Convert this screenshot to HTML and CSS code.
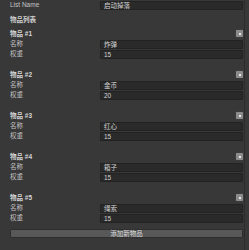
FILE: index.html
```html
<!DOCTYPE html>
<html>
<head>
<meta charset="utf-8">
<link rel="stylesheet" href="styles.css">
</head>
<body>
<div class="inspector">
  <div class="row">
    <div class="label">List Name</div>
    <div class="field">启动掉落</div>
  </div>
  <div class="section-title">物品列表</div>

  <div class="item">
    <div class="item-head"><span class="item-title">物品 #1</span><span class="remove"></span></div>
    <div class="row"><div class="label">名称</div><div class="field">炸弹</div></div>
    <div class="row"><div class="label">权重</div><div class="field">15</div></div>
  </div>

  <div class="item">
    <div class="item-head"><span class="item-title">物品 #2</span><span class="remove"></span></div>
    <div class="row"><div class="label">名称</div><div class="field">金币</div></div>
    <div class="row"><div class="label">权重</div><div class="field">20</div></div>
  </div>

  <div class="item">
    <div class="item-head"><span class="item-title">物品 #3</span><span class="remove"></span></div>
    <div class="row"><div class="label">名称</div><div class="field">红心</div></div>
    <div class="row"><div class="label">权重</div><div class="field">15</div></div>
  </div>

  <div class="item">
    <div class="item-head"><span class="item-title">物品 #4</span><span class="remove"></span></div>
    <div class="row"><div class="label">名称</div><div class="field">箱子</div></div>
    <div class="row"><div class="label">权重</div><div class="field">15</div></div>
  </div>

  <div class="item">
    <div class="item-head"><span class="item-title">物品 #5</span><span class="remove"></span></div>
    <div class="row"><div class="label">名称</div><div class="field">绳索</div></div>
    <div class="row"><div class="label">权重</div><div class="field">15</div></div>
  </div>

  <div class="add-btn">添加新物品</div>
</div>
</body>
</html>
```

FILE: styles.css
```css
html, body {
  margin: 0;
  padding: 0;
  background: #383838;
}
body {
  width: 249px;
  height: 250px;
  overflow: hidden;
  font-family: "Liberation Sans", "Noto Sans CJK SC", sans-serif;
  font-size: 6.5px;
  color: #c4c4c4;
}
.inspector {
  width: 245px;
  height: 250px;
  box-sizing: border-box;
  border-right: 1px solid #2b2b2b;
  padding: 0 1px 0 10px;
  display: flex;
  flex-direction: column;
}
.row {
  display: flex;
  align-items: center;
  height: 10px;
}
.label {
  width: 90px;
  flex: none;
  line-height: 10px;
  white-space: nowrap;
}
.field {
  flex: 1;
  height: 9px;
  line-height: 9px;
  box-sizing: border-box;
  background: #2a2a2a;
  border: 1px solid #222222;
  border-radius: 1px;
  padding-left: 3px;
  color: #d2d2d2;
  line-height: 7px;
  white-space: nowrap;
}
.section-title {
  margin-top: 5px;
  height: 10px;
  line-height: 10px;
  font-weight: bold;
  color: #d0d0d0;
}
.item {
  margin-top: 2px;
  margin-bottom: 7px;
}
.item-head {
  height: 12px;
  display: flex;
  align-items: center;
  justify-content: space-between;
}
.item-title {
  font-weight: bold;
  color: #d6d6d6;
}
.remove {
  width: 7px;
  height: 7px;
  box-sizing: border-box;
  background: #8c8c8c;
  border-radius: 1px;
  box-shadow: 0 0 1px #6a6a6a;
  display: flex;
  align-items: center;
  justify-content: center;
  margin-top: 1px;
}
.remove::after {
  content: "";
  width: 2px;
  height: 2px;
  background: #e8e8e8;
}
.add-btn {
  margin-top: -1px;
  height: 9px;
  line-height: 8px;
  box-sizing: border-box;
  background: #585858;
  border: 1px solid #2e2e2e;
  border-radius: 1px;
  text-align: center;
  color: #dedede;
}
```
